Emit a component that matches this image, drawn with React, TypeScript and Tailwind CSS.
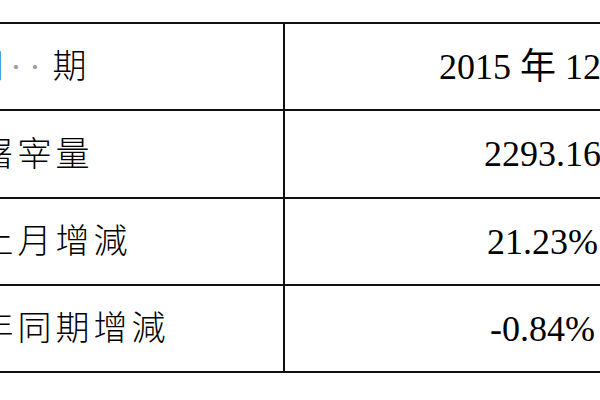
const ROWS = [
  { label: "date", value: "2015 年 12 月", h: "h-[87px]" },
  { label: "屠宰量", value: "2293.16", h: "h-[88px]" },
  { label: "較上月增減", value: "21.23%", h: "h-[87px]" },
  { label: "較去年同期增減", value: "-0.84%", h: "h-[87px]" },
];

function Label({ text }: { text: string }) {
  if (text === "date") {
    return (
      <div className="flex items-center mr-[12px]">
        <span>日</span>
        <span className="w-[19px] text-center text-[#9a9a9a]">·</span>
        <span className="w-[19px] text-center text-[#9a9a9a]">·</span>
        <span className="ml-[8px]">期</span>
      </div>
    );
  }
  return <span className="tracking-[4px] pl-[2px]">{text}</span>;
}

export default function App() {
  return (
    <div
      className="w-[600px] h-[400px] overflow-hidden bg-white text-black"
      style={{ fontFamily: '"Liberation Serif", "Noto Sans CJK TC", serif' }}
    >
      <div className="mt-[22px] ml-[-212px] w-[1012px] border-b-2 border-[#111]">
        {ROWS.map((r) => (
          <div key={r.label} className={`flex border-t-2 border-[#111] ${r.h}`}>
            <div className="w-[497px] flex items-center justify-center border-r-2 border-[#111] text-[34px] font-light">
              <Label text={r.label} />
            </div>
            <div className="w-[515px] flex items-center justify-center text-[36px]">
              {r.value}
            </div>
          </div>
        ))}
      </div>
    </div>
  );
}
